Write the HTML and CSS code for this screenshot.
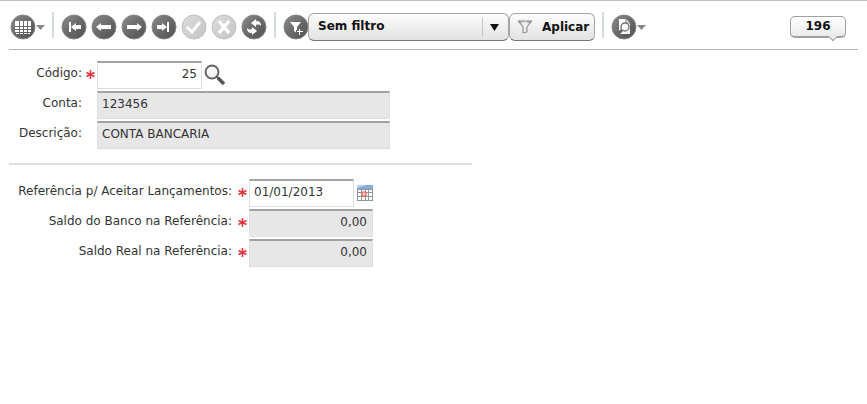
FILE: index.html
```html
<!DOCTYPE html>
<html lang="pt-BR">
<head>
    <meta charset="UTF-8">
    <meta name="viewport" content="width=device-width, initial-scale=1.0">
    <title>Conta</title>
    <link rel="stylesheet" href="styles.css">
</head>
<body>
    <!-- gradients shared by the buttons -->
    <svg class="defs" width="0" height="0" aria-hidden="true">
        <defs>
            <linearGradient id="dark" x1="0" y1="0" x2="1" y2="1">
                <stop offset="0" stop-color="#8c8c8c"/>
                <stop offset="0.5" stop-color="#6a6a6a"/>
                <stop offset="1" stop-color="#505050"/>
            </linearGradient>
            <linearGradient id="light" x1="0" y1="0" x2="1" y2="1">
                <stop offset="0" stop-color="#dcdcdc"/>
                <stop offset="1" stop-color="#c4c4c4"/>
            </linearGradient>
            <linearGradient id="funnel" x1="0" y1="0" x2="1" y2="0">
                <stop offset="0" stop-color="#888"/>
                <stop offset="0.5" stop-color="#f4f4f4"/>
                <stop offset="1" stop-color="#777"/>
            </linearGradient>
        </defs>
    </svg>

    <header class="toolbar">
        <button class="icon-button" aria-label="Grade">
            <svg width="26" height="26" viewBox="0 0 26 26">
                <circle cx="13" cy="13" r="12" fill="url(#dark)" stroke="#858585"/>
                <path d="M5 7h4v5H5zM10 7h3v5h-3zM14 7h3v5h-3zM18 7h3v5h-3zM5 13h4v2H5zM10 13h3v2h-3zM14 13h3v2h-3zM18 13h3v2h-3zM5 16h4v2H5zM10 16h3v2h-3zM14 16h3v2h-3zM18 16h3v2h-3z" fill="#fff"/>
                <path d="M6 19h3v1H6zM10 19h3v1h-3zM14 19h3v1h-3zM18 19h2v1h-2z" fill="#fff"/>
            </svg>
            <svg width="9" height="5" viewBox="0 0 9 5"><path d="M0 0h9L4.500 5z" fill="#888"/></svg>
        </button>
        <span class="separator"></span>
        <div class="group">
            <button class="icon-button" aria-label="Primeiro">
                <svg width="26" height="26" viewBox="0 0 26 26">
                    <circle cx="13" cy="13" r="12" fill="url(#dark)" stroke="#858585"/>
                    <path d="M8 8h2v10H8zM10 13l5-4v2h5v4h-5v2z" fill="#fff"/>
                </svg>
            </button>
            <button class="icon-button" aria-label="Anterior">
                <svg width="26" height="26" viewBox="0 0 26 26">
                    <circle cx="13" cy="13" r="12" fill="url(#dark)" stroke="#858585"/>
                    <path d="M5 13l5-4v2h10v4H10v2z" fill="#fff"/>
                </svg>
            </button>
            <button class="icon-button" aria-label="Próximo">
                <svg width="26" height="26" viewBox="0 0 26 26">
                    <circle cx="13" cy="13" r="12" fill="url(#dark)" stroke="#858585"/>
                    <path d="M21 13l-5-4v2H6v4h10v2z" fill="#fff"/>
                </svg>
            </button>
            <button class="icon-button" aria-label="Último">
                <svg width="26" height="26" viewBox="0 0 26 26">
                    <circle cx="13" cy="13" r="12" fill="url(#dark)" stroke="#858585"/>
                    <path d="M16 8h2v10h-2zM16 13l-5-4v2H6v4h5v2z" fill="#fff"/>
                </svg>
            </button>
            <button class="icon-button" aria-label="Confirmar" disabled>
                <svg width="26" height="26" viewBox="0 0 26 26">
                    <circle cx="13" cy="13" r="12" fill="url(#light)" stroke="#c0c0c0"/>
                    <path d="M6 13l5 5 8-10" fill="none" stroke="#fff" stroke-width="3"/>
                </svg>
            </button>
            <button class="icon-button" aria-label="Cancelar" disabled>
                <svg width="26" height="26" viewBox="0 0 26 26">
                    <circle cx="13" cy="13" r="12" fill="url(#light)" stroke="#c0c0c0"/>
                    <path d="M8 7l10 12M18 7L8 19" fill="none" stroke="#fff" stroke-width="3.500"/>
                </svg>
            </button>
            <button class="icon-button" aria-label="Atualizar">
                <svg width="26" height="26" viewBox="0 0 26 26">
                    <circle cx="13" cy="13" r="12" fill="url(#dark)" stroke="#858585"/>
                    <path d="M10 9l5-4v2c3 0 5 1 5 5-1-1-2-2-5-1v2zM16 17l-5 4v-2c-3 0-5-1-5-5 1 1 2 2 5 1v-2z" fill="#fff"/>
                </svg>
            </button>
        </div>
        <span class="separator"></span>
        <div class="filter">
            <button class="icon-button" aria-label="Novo filtro">
                <svg width="26" height="26" viewBox="0 0 26 26">
                    <circle cx="13" cy="13" r="12" fill="url(#dark)" stroke="#858585"/>
                    <path d="M7 8h11l-4 5v6l-3-2v-4z" fill="#fff"/>
                    <path d="M16.500 14v6M13 17.500h7" stroke="#666" stroke-width="3"/>
                    <path d="M16.500 15v6M14 17.500h6" stroke="#fff"/>
                </svg>
            </button>
            <div class="select-box">
                <select class="filter-select" aria-label="Filtro">
                    <option>Sem filtro</option>
                </select>
                <svg class="select-arrow" width="26" height="18" viewBox="0 0 26 18">
                    <path d="M0 0h1v18H0z" fill="#c4c4c4"/>
                    <path d="M8 6h9l-4.500 7z" fill="#111"/>
                </svg>
            </div>
            <button class="apply">
                <svg width="16" height="16" viewBox="0 0 16 16">
                    <path d="M1 2h14l-5 6v5l-4 1V8z" fill="url(#funnel)" stroke="#8c8c8c"/>
                    <path d="M4 4h8l-3 4H7z" fill="#eee"/>
                </svg>
                Aplicar
            </button>
        </div>
        <span class="separator"></span>
        <button class="icon-button" aria-label="Visualizar">
            <svg width="26" height="26" viewBox="0 0 26 26">
                <circle cx="13" cy="13" r="12" fill="url(#dark)" stroke="#858585"/>
                <path d="M8 5h7l4 4v11H8z" fill="#fff"/>
                <path d="M15 5v4h4" fill="none" stroke="#777"/>
                <circle cx="14" cy="13" r="4" fill="#fff" stroke="#777" stroke-width="1.500"/>
                <path d="M11 16l-4 4" stroke="#666" stroke-width="3"/>
            </svg>
            <svg width="9" height="5" viewBox="0 0 9 5"><path d="M0 0h9L4.500 5z" fill="#888"/></svg>
        </button>
        <div class="record-count">196</div>
    </header>

    <main>
        <form class="fields account">
            <label for="codigo">Código:</label>
            <svg class="required" width="9" height="9" viewBox="0 0 9 9"><path d="M4.500 0v9M.5 2.500l8 4M8.500 2.500l-8 4" stroke="#e6333b" stroke-width="1.500"/></svg>
            <div class="field">
                <input class="code number" id="codigo" type="text" value="25">
                <button class="tool" type="button" aria-label="Pesquisar">
                    <svg width="22" height="22" viewBox="0 0 22 22">
                        <circle cx="8" cy="8" r="6.500" fill="#f4f6f6" stroke="#666" stroke-width="2"/>
                        <path d="M12.500 12.500l3 3" stroke="#555" stroke-width="2"/>
                        <path d="M14 14l6 6" stroke="#555" stroke-width="3.500"/>
                    </svg>
                </button>
            </div>
            <label for="conta">Conta:</label>
            <input class="wide" id="conta" type="text" value="123456" readonly>
            <label for="descricao">Descrição:</label>
            <input class="wide" id="descricao" type="text" value="CONTA BANCARIA" readonly>
        </form>

        <hr>

        <form class="fields balance">
            <label for="referencia">Referência p/ Aceitar Lançamentos:</label>
            <svg class="required" width="9" height="9" viewBox="0 0 9 9"><path d="M4.500 0v9M.5 2.500l8 4M8.500 2.500l-8 4" stroke="#e6333b" stroke-width="1.500"/></svg>
            <div class="field">
                <input class="code" id="referencia" type="text" value="01/01/2013">
                <button class="tool" type="button" aria-label="Calendário">
                    <svg width="18" height="18" viewBox="0 0 18 18">
                        <path d="M1 1h16v16H1z" fill="#8b9895"/>
                        <path d="M1 1h16v4H1z" fill="#86abd9"/>
                        <path d="M1 1h10L1 4z" fill="#b5cff0"/>
                        <path d="M2 6h3v2H2zM6 6h3v2H6zM10 6h2v2h-2zM13 6h3v2h-3zM2 9h3v3H2zM10 9h2v3h-2zM13 9h3v3h-3zM2 13h3v3H2zM6 13h3v3H6zM10 13h2v3h-2zM13 13h3v3h-3z" fill="#fff"/>
                        <path d="M6 8h4v4H6z" fill="#ffd0c8" stroke="#ee4b43"/>
                    </svg>
                </button>
            </div>
            <label for="saldo-banco">Saldo do Banco na Referência:</label>
            <svg class="required" width="9" height="9" viewBox="0 0 9 9"><path d="M4.500 0v9M.5 2.500l8 4M8.500 2.500l-8 4" stroke="#e6333b" stroke-width="1.500"/></svg>
            <input class="amount number" id="saldo-banco" type="text" value="0,00" readonly>
            <label for="saldo-real">Saldo Real na Referência:</label>
            <svg class="required" width="9" height="9" viewBox="0 0 9 9"><path d="M4.500 0v9M.5 2.500l8 4M8.500 2.500l-8 4" stroke="#e6333b" stroke-width="1.500"/></svg>
            <input class="amount number" id="saldo-real" type="text" value="0,00" readonly>
        </form>
    </main>
</body>
</html>
```
FILE: styles.css
```css
* {
    box-sizing: border-box;
}
body {
    margin: 0;
    border-top: 1px solid #c0c0c0;
    background: #fff;
    color: #333;
    font-family: Verdana, "DejaVu Sans", sans-serif;
    font-size: 12px;
}
.defs {
    position: absolute;
}
button {
    margin: 0;
    padding: 0;
    border: none;
    background: none;
    font-family: inherit;
    cursor: pointer;
}
svg {
    display: block;
}

/* Toolbar */
.toolbar {
    display: flex;
    align-items: center;
    gap: 7px;
    height: 49px;
    margin: 0 9px;
    padding: 4px 12px 0 1px;
    border-bottom: 1px solid #aab4b2;
}
.group {
    display: flex;
    gap: 4px;
}
.icon-button {
    display: flex;
    align-items: center;
}
.separator {
    width: 2px;
    height: 26px;
    margin-bottom: 5px;
    background: #d5dddb;
}
.filter {
    display: flex;
    align-items: center;
}
.filter .icon-button {
    margin-right: -1px;
}
.select-box {
    position: relative;
}
.filter-select,
.apply {
    height: 28px;
    border: 1px solid #a4a4a4;
    border-bottom-color: #777;
    border-radius: 6px;
    background: linear-gradient(#fcfcfc, #e2e2e2);
    color: #111;
    font-family: inherit;
    font-size: 12px;
    font-weight: bold;
}
.filter-select {
    display: block;
    appearance: none;
    width: 201px;
    padding: 0 28px 2px 9px;
}
.select-arrow {
    position: absolute;
    top: 5px;
    right: 1px;
    pointer-events: none;
}
.apply {
    display: flex;
    align-items: center;
    gap: 9px;
    padding: 0 5px 0 7px;
}
.record-count {
    position: relative;
    width: 56px;
    height: 22px;
    margin: 0 0 1px auto;
    border: 1px solid #a0a0a0;
    border-bottom-width: 2px;
    border-radius: 5px;
    background: linear-gradient(#fff, #ebebeb);
    color: #111;
    font-size: 12px;
    font-weight: bold;
    line-height: 18px;
    text-align: center;
}
.record-count::after {
    content: "";
    position: absolute;
    right: 9px;
    bottom: -4px;
    width: 5px;
    height: 5px;
    border: solid #a0a0a0;
    border-width: 0 1px 1px 0;
    background: #ebebeb;
    transform: rotate(45deg);
}

/* Form */
.fields {
    display: grid;
    justify-content: start;
    row-gap: 2px;
}
.account {
    grid-template-columns: 82px 15px auto;
    padding-top: 11px;
}
.balance {
    grid-template-columns: 232px 17px auto;
}
.fields label {
    grid-column: 1;
    padding-top: 4px;
    text-align: right;
    line-height: 16px;
}
.required {
    grid-column: 2;
    justify-self: end;
    margin: 9px 2px 0 0;
}
.field {
    display: flex;
    align-items: center;
    gap: 2px;
}
.field,
.fields > input {
    grid-column: 3;
}
.fields input {
    width: 105px;
    height: 28px;
    padding: 0 4px 3px;
    border: 1px solid #dcdfdf;
    border-top: 2px solid #a2a2a2;
    background: #fff;
    color: #333;
    font-family: inherit;
    font-size: 12px;
}
.fields input[readonly] {
    background: #e7e7e7;
}
.fields .wide {
    width: 293px;
}
.fields .amount {
    width: 124px;
    padding-right: 5px;
}
.number {
    text-align: right;
}
hr {
    width: 463px;
    max-width: 100%;
    height: 2px;
    margin: 14px 0 14px 9px;
    border: none;
    background: #dbe2e0;
}
```
